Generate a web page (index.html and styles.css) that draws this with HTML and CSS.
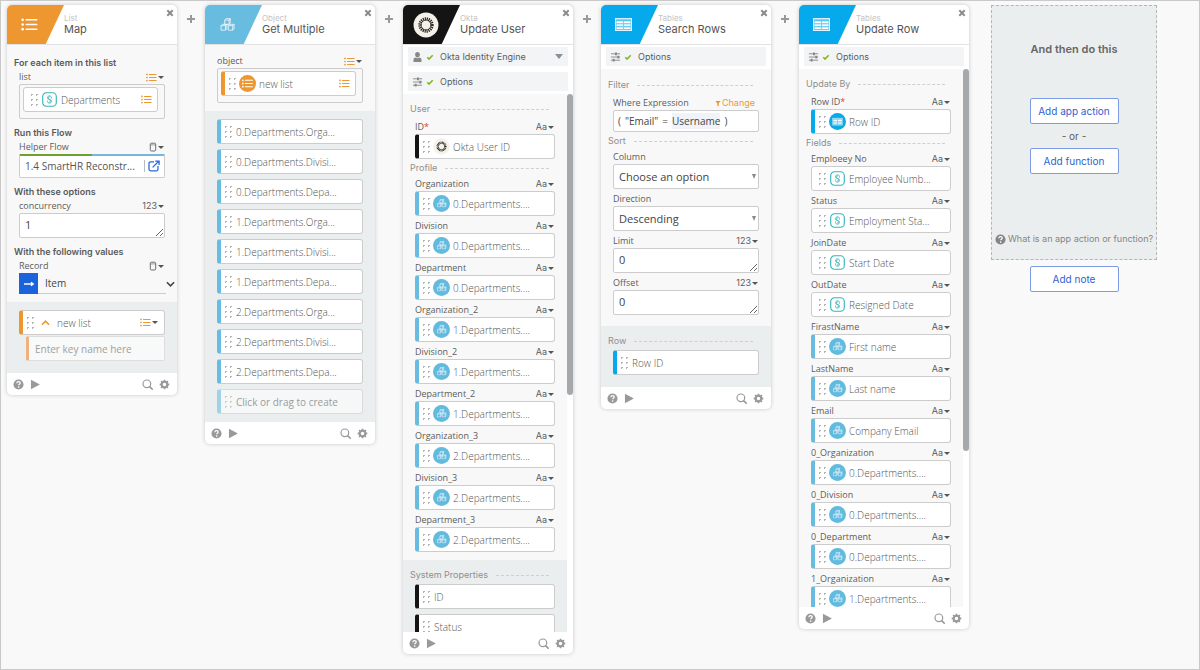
FILE: index.html
```html
<!DOCTYPE html>
<html lang="en">
<head>
<meta charset="utf-8">
<title>Flow editor</title>
<link rel="stylesheet" href="styles.css">
</head>
<body>
<svg class="sprite" aria-hidden="true">
  <symbol id="list" viewBox="0 0 18 14"><g fill="currentColor"><circle cx="1.6" cy="2" r="1.4"/><circle cx="1.6" cy="7" r="1.4"/><circle cx="1.6" cy="12" r="1.4"/><rect x="4.6" y="1.2" width="13" height="1.6" rx=".8"/><rect x="4.6" y="6.2" width="13" height="1.6" rx=".8"/><rect x="4.6" y="11.2" width="13" height="1.6" rx=".8"/></g></symbol>
  <symbol id="cubes" viewBox="0 0 16 14"><g fill="none" stroke="currentColor" stroke-width=".8" stroke-linejoin="round"><path d="M5 2.2h4.6v4.6H5zM5 2.2L6.6.7H11L9.600 2.2M11 .7v4.400L9.600 6.800M1 8.300h4.800v4.800H1zM1 8.300l1.500-1.500H7.300L5.800 8.300M7.300 6.800v4.800l-1.500 1.500M8.800 8.300h4.800v4.800H8.800zM8.800 8.300l1.500-1.500h4.800l-1.500 1.500M15.100 6.800v4.800l-1.500 1.500"/></g></symbol>
  <symbol id="table" viewBox="0 0 16 12"><path fill="currentColor" fill-rule="evenodd" d="M0 0h16v12H0zM1 .9v1h14v-1zM1.300 2.900v2h6.200v-2zM8.500 2.900v2h6.200v-2zM1.300 5.800v2h6.200v-2zM8.500 5.800v2h6.200v-2zM1.300 8.700v2h6.200v-2zM8.500 8.700v2h6.200v-2z" opacity=".45"/><path fill="currentColor" d="M1.300 2.900h6.200v2H1.300zM8.500 2.900h6.200v2H8.500zM1.300 5.700h6.200v2H1.300zM8.500 5.700h6.200v2H8.500zM1.300 8.500h6.200v2H1.300zM8.500 8.500h6.200v2H8.500zM0 0h16v1.200H0zM0 0h.7v12H0zM15.300 0h.7v12h-.7zM0 11.400h16v.6H0z"/></symbol>
  <symbol id="burst" viewBox="0 0 24 24"><circle cx="12" cy="12" r="11.500" fill="#f4f1e8"/><circle cx="12" cy="12" r="5.600" fill="none" stroke="#222" stroke-width="3" stroke-dasharray="1 .76"/><circle cx="12" cy="12" r="4.600" fill="none" stroke="#222" stroke-width=".6"/></symbol>
  <symbol id="hr" viewBox="0 0 18 18"><rect x="1.800" y="1.800" width="14.400" height="14.400" rx="4" fill="#fff" stroke="#35b5bb" stroke-width="1.200"/><g transform="translate(2.600 2.600) scale(.8)"><path fill="none" stroke="#35b5bb" stroke-width="1.150" stroke-linecap="round" stroke-linejoin="round" d="M10.600 6.200V5.600C10.600 4 9.500 3.200 8 3.200S5.400 4 5.400 5.500c0 1.200.6 1.800 1.700 2.300l1.800.8c.6.300.8.600.8 1.300 0 .9-.6 1.400-1.700 1.400M5.400 9.900v.5c0 1.600 1.100 2.400 2.600 2.400s2.600-.8 2.600-2.300c0-1.200-.6-1.800-1.700-2.300L7.100 7.400c-.6-.3-.8-.6-.8-1.300 0-.9.6-1.400 1.700-1.400"/></g></symbol>
  <symbol id="c-cubes" viewBox="0 0 18 18"><circle cx="9" cy="9" r="9" fill="#62bbdf"/><use href="#cubes" x="4" y="4" width="10.500" height="9.200" color="#fff"/></symbol>
  <symbol id="c-table" viewBox="0 0 18 18"><circle cx="9" cy="9" r="9" fill="#0aa9ea"/><use href="#table" x="3.500" y="5" width="11" height="8.200" color="#fff"/></symbol>
  <symbol id="c-list" viewBox="0 0 18 18"><circle cx="9" cy="9" r="9" fill="#ee9730"/><use href="#list" x="3" y="4.300" width="12" height="9.400" color="#fff"/></symbol>
  <symbol id="help" viewBox="0 0 12 12"><circle cx="6" cy="6" r="5.500" fill="currentColor"/><path d="M4.200 4.700C4.300 3.400 5 2.900 6.100 2.900s1.800.6 1.800 1.500c0 1.200-1.700 1.300-1.700 2.500" fill="none" stroke="#fff" stroke-width="1.400"/><circle cx="6.200" cy="8.800" r=".9" fill="#fff"/></symbol>
  <symbol id="play" viewBox="0 0 12 12"><path d="M1 .8v10.400l9.800-5.200z" fill="currentColor"/></symbol>
  <symbol id="search" viewBox="0 0 12 12"><path d="M8.500 8.500l2.700 2.700" stroke="currentColor" stroke-width="1.800" stroke-linecap="round"/><circle cx="5.300" cy="5.300" r="4.200" fill="none" stroke="currentColor" stroke-width="1.300"/></symbol>
  <symbol id="gear" viewBox="0 0 12 12"><circle cx="6" cy="6" r="3" fill="none" stroke="currentColor" stroke-width="2.200"/><path d="M6 .8v1.600M6 9.600v1.600M.8 6h1.600M9.600 6h1.600M2.300 2.300l1.200 1.200M8.500 8.500l1.200 1.200M9.700 2.300L8.500 3.500M3.500 8.500L2.300 9.700" stroke="currentColor" stroke-width="2"/></symbol>
  <symbol id="close" viewBox="0 0 8 8"><path d="M1.300 1.300l5.400 5.400M6.700 1.300L1.300 6.700" stroke="currentColor" stroke-width="2"/></symbol>
  <symbol id="plus" viewBox="0 0 8 8"><path d="M4 0v8M0 4h8" stroke="currentColor" stroke-width="2"/></symbol>
  <symbol id="sliders" viewBox="0 0 12 10"><path d="M1 1.500h10M1 5h10M1 8.500h10" stroke="currentColor" stroke-width="1"/><path d="M6.500 0v3M9 3.500v3M4 7v3" stroke="currentColor" stroke-width="2.200"/></symbol>
  <symbol id="user" viewBox="0 0 10 10"><path fill="currentColor" d="M5 0c1.500 0 2.400 1 2.400 2.500S6.500 5.600 5 5.600 2.600 4 2.600 2.500 3.500 0 5 0zM1 10V7.600C1 6.400 2 5.700 3 5.500c1 1 3 1 4 0 1 .2 2 .9 2 2.100V10z"/></symbol>
  <symbol id="check" viewBox="0 0 8 8"><path d="M1.300 4.300l1.700 1.700 3.700-3.800" fill="none" stroke="#83b81a" stroke-width="1.600"/></symbol>
  <symbol id="any" viewBox="0 0 8 10"><rect x="1.300" y="1.200" width="5.400" height="7.800" rx="1.200" fill="none" stroke="currentColor" stroke-width=".9"/><path d="M1.300 2.900h5.400" stroke="currentColor" stroke-width=".6"/></symbol>
  <symbol id="open" viewBox="0 0 12 12"><path d="M6 1.800H2.500c-.9 0-1.500.6-1.500 1.500v6c0 .9.600 1.500 1.500 1.500h6c.9 0 1.500-.6 1.500-1.500V6M4.600 7.400L10.300 1.700M7.200 1.100h3.900V5" fill="none" stroke="#2a6be0" stroke-width="1.300"/></symbol>
  <symbol id="arrow" viewBox="0 0 12 8"><path d="M1 4h9M8 2.200L10.300 4 8 5.800" fill="none" stroke="#fff" stroke-width="1.300"/></symbol>
  <symbol id="chev" viewBox="0 0 10 6"><path d="M1 1l4 4 4-4" fill="none" stroke="currentColor" stroke-width="1.700"/></symbol>
  <symbol id="funnel" viewBox="0 0 8 8"><path d="M.5.500h7L5 3.800V8L3 6.500V3.800z" fill="currentColor"/></symbol>
</svg>

<main class="board">
  <section class="card">
    <header class="head"><span class="logo orange"><svg class="logo-icon"><use href="#list"/></svg></span><div class="titles"><small>List</small><h2>Map</h2></div><button class="close" aria-label="Close"><svg><use href="#close"/></svg></button></header>
    <div class="body first">
      <h3>For each item in this list</h3>
      <div class="label"><span>list</span><button class="type list-type" aria-label="List type"><svg><use href="#list"/></svg></button></div>
      <div class="drop"><div class="pill plain"><i class="grip"></i><svg class="ic"><use href="#hr"/></svg><span>Departments</span><svg class="tail"><use href="#list"/></svg></div></div>
      <h3>Run this Flow</h3>
      <div class="label"><span>Helper Flow</span><button class="type" aria-label="Any type"><svg class="any"><use href="#any"/></svg></button></div>
      <div class="flow"><span>1.4 SmartHR Reconstr...</span><a href="#flow" aria-label="Open flow"><svg><use href="#open"/></svg></a></div>
      <h3>With these options</h3>
      <div class="label"><label for="conc">concurrency</label><button class="type">123</button></div>
      <textarea id="conc" rows="1">1</textarea>
      <h3>With the following values</h3>
      <div class="label"><span>Record</span><button class="type" aria-label="Any type"><svg class="any"><use href="#any"/></svg></button></div>
      <div class="record"><span class="go"><svg><use href="#arrow"/></svg></span><span class="item">Item</span><button aria-label="Expand"><svg><use href="#chev"/></svg></button></div>
    </div>
    <div class="out">
      <div class="pill s-orange key"><i class="grip"></i><svg class="up"><use href="#chev"/></svg><span>new list</span><button class="type list-type" aria-label="List type"><svg><use href="#list"/></svg></button></div>
      <input class="newkey" aria-label="Key name" placeholder="Enter key name here">
    </div>
    <footer class="foot"><button aria-label="Help"><svg><use href="#help"/></svg></button><button aria-label="Run"><svg><use href="#play"/></svg></button><button class="push" aria-label="Search"><svg><use href="#search"/></svg></button><button aria-label="Settings"><svg><use href="#gear"/></svg></button></footer>
  </section>
  <button class="add" aria-label="Insert step"><svg><use href="#plus"/></svg></button>

  <section class="card">
    <header class="head"><span class="logo sky"><svg class="logo-icon"><use href="#cubes"/></svg></span><div class="titles"><small>Object</small><h2>Get Multiple</h2></div><button class="close" aria-label="Close"><svg><use href="#close"/></svg></button></header>
    <div class="body object">
      <div class="label"><span>object</span><button class="type list-type" aria-label="List type"><svg><use href="#list"/></svg></button></div>
      <div class="drop"><div class="pill s-orange"><i class="grip"></i><svg class="ic"><use href="#c-list"/></svg><span>new list</span><svg class="tail"><use href="#list"/></svg></div></div>
    </div>
    <div class="out stack keys">
      <div class="pill s-sky"><i class="grip"></i><span>0.Departments.Orga...</span></div>
      <div class="pill s-sky"><i class="grip"></i><span>0.Departments.Divisi...</span></div>
      <div class="pill s-sky"><i class="grip"></i><span>0.Departments.Depa...</span></div>
      <div class="pill s-sky"><i class="grip"></i><span>1.Departments.Orga...</span></div>
      <div class="pill s-sky"><i class="grip"></i><span>1.Departments.Divisi...</span></div>
      <div class="pill s-sky"><i class="grip"></i><span>1.Departments.Depa...</span></div>
      <div class="pill s-sky"><i class="grip"></i><span>2.Departments.Orga...</span></div>
      <div class="pill s-sky"><i class="grip"></i><span>2.Departments.Divisi...</span></div>
      <div class="pill s-sky"><i class="grip"></i><span>2.Departments.Depa...</span></div>
      <div class="pill s-sky ghost"><i class="grip"></i><span>Click or drag to create</span></div>
    </div>
    <footer class="foot"><button aria-label="Help"><svg><use href="#help"/></svg></button><button aria-label="Run"><svg><use href="#play"/></svg></button><button class="push" aria-label="Search"><svg><use href="#search"/></svg></button><button aria-label="Settings"><svg><use href="#gear"/></svg></button></footer>
  </section>
  <button class="add" aria-label="Insert step"><svg><use href="#plus"/></svg></button>

  <section class="card">
    <header class="head"><span class="logo black"><svg class="logo-badge"><use href="#burst"/></svg></span><div class="titles"><small>Okta</small><h2>Update User</h2></div><button class="close" aria-label="Close"><svg><use href="#close"/></svg></button></header>
    <div class="bars">
      <button class="bar"><svg class="bar-icon"><use href="#user"/></svg><svg class="check"><use href="#check"/></svg><span>Okta Identity Engine</span><i class="caret"></i></button>
      <button class="bar"><svg class="bar-icon"><use href="#sliders"/></svg><svg class="check"><use href="#check"/></svg><span>Options</span></button>
    </div>
    <div class="scroller">
      <div class="content">
        <div class="body fields">
          <h4>User</h4>
          <div class="label"><span>ID<b>*</b></span><button class="type">Aa</button></div>
          <div class="pill s-black"><i class="grip"></i><svg class="ic"><use href="#burst"/></svg><span>Okta User ID</span></div>
          <h4>Profile</h4>
          <div class="label"><span>Organization</span><button class="type">Aa</button></div>
          <div class="pill s-sky"><i class="grip"></i><svg class="ic"><use href="#c-cubes"/></svg><span>0.Departments....</span></div>
          <div class="label"><span>Division</span><button class="type">Aa</button></div>
          <div class="pill s-sky"><i class="grip"></i><svg class="ic"><use href="#c-cubes"/></svg><span>0.Departments....</span></div>
          <div class="label"><span>Department</span><button class="type">Aa</button></div>
          <div class="pill s-sky"><i class="grip"></i><svg class="ic"><use href="#c-cubes"/></svg><span>0.Departments....</span></div>
          <div class="label"><span>Organization_2</span><button class="type">Aa</button></div>
          <div class="pill s-sky"><i class="grip"></i><svg class="ic"><use href="#c-cubes"/></svg><span>1.Departments....</span></div>
          <div class="label"><span>Division_2</span><button class="type">Aa</button></div>
          <div class="pill s-sky"><i class="grip"></i><svg class="ic"><use href="#c-cubes"/></svg><span>1.Departments....</span></div>
          <div class="label"><span>Department_2</span><button class="type">Aa</button></div>
          <div class="pill s-sky"><i class="grip"></i><svg class="ic"><use href="#c-cubes"/></svg><span>1.Departments....</span></div>
          <div class="label"><span>Organization_3</span><button class="type">Aa</button></div>
          <div class="pill s-sky"><i class="grip"></i><svg class="ic"><use href="#c-cubes"/></svg><span>2.Departments....</span></div>
          <div class="label"><span>Division_3</span><button class="type">Aa</button></div>
          <div class="pill s-sky"><i class="grip"></i><svg class="ic"><use href="#c-cubes"/></svg><span>2.Departments....</span></div>
          <div class="label"><span>Department_3</span><button class="type">Aa</button></div>
          <div class="pill s-sky"><i class="grip"></i><svg class="ic"><use href="#c-cubes"/></svg><span>2.Departments....</span></div>
        </div>
        <div class="out stack">
          <h4>System Properties</h4>
          <div class="pill s-black"><i class="grip"></i><span>ID</span></div>
          <div class="pill s-black"><i class="grip"></i><span>Status</span></div>
        </div>
      </div>
      <div class="track"><div class="thumb short"></div></div>
    </div>
    <footer class="foot"><button aria-label="Help"><svg><use href="#help"/></svg></button><button aria-label="Run"><svg><use href="#play"/></svg></button><button class="push" aria-label="Search"><svg><use href="#search"/></svg></button><button aria-label="Settings"><svg><use href="#gear"/></svg></button></footer>
  </section>
  <button class="add" aria-label="Insert step"><svg><use href="#plus"/></svg></button>

  <section class="card">
    <header class="head"><span class="logo azure"><svg class="logo-icon"><use href="#table"/></svg></span><div class="titles"><small>Tables</small><h2>Search Rows</h2></div><button class="close" aria-label="Close"><svg><use href="#close"/></svg></button></header>
    <div class="bars"><button class="bar"><svg class="bar-icon"><use href="#sliders"/></svg><svg class="check"><use href="#check"/></svg><span>Options</span></button></div>
    <div class="body search">
      <h4>Filter</h4>
      <div class="label"><span>Where Expression</span><button class="change"><svg><use href="#funnel"/></svg>Change</button></div>
      <div class="expr"><span>(</span><span>"Email"</span><span>=</span><mark>Username</mark><span>)</span></div>
      <h4>Sort</h4>
      <div class="label"><label for="col">Column</label></div>
      <div class="pick"><select id="col"><option>Choose an option</option></select></div>
      <div class="label"><label for="dir">Direction</label></div>
      <div class="pick"><select id="dir"><option>Descending</option></select></div>
      <div class="label"><label for="limit">Limit</label><button class="type">123</button></div>
      <textarea id="limit" rows="1">0</textarea>
      <div class="label"><label for="offset">Offset</label><button class="type">123</button></div>
      <textarea id="offset" rows="1">0</textarea>
    </div>
    <div class="out row-out">
      <h4>Row</h4>
      <div class="pill s-azure"><i class="grip"></i><span>Row ID</span></div>
    </div>
    <footer class="foot"><button aria-label="Help"><svg><use href="#help"/></svg></button><button aria-label="Run"><svg><use href="#play"/></svg></button><button class="push" aria-label="Search"><svg><use href="#search"/></svg></button><button aria-label="Settings"><svg><use href="#gear"/></svg></button></footer>
  </section>
  <button class="add" aria-label="Insert step"><svg><use href="#plus"/></svg></button>

  <section class="card">
    <header class="head"><span class="logo azure"><svg class="logo-icon"><use href="#table"/></svg></span><div class="titles"><small>Tables</small><h2>Update Row</h2></div><button class="close" aria-label="Close"><svg><use href="#close"/></svg></button></header>
    <div class="bars"><button class="bar"><svg class="bar-icon"><use href="#sliders"/></svg><svg class="check"><use href="#check"/></svg><span>Options</span></button></div>
    <div class="scroller">
      <div class="content">
        <div class="body fields">
          <h4>Update By</h4>
          <div class="label"><span>Row ID<b>*</b></span><button class="type">Aa</button></div>
          <div class="pill s-azure"><i class="grip"></i><svg class="ic"><use href="#c-table"/></svg><span>Row ID</span></div>
          <h4>Fields</h4>
          <div class="label"><span>Emploeey No</span><button class="type">Aa</button></div>
          <div class="pill plain"><i class="grip"></i><svg class="ic"><use href="#hr"/></svg><span>Employee Numb...</span></div>
          <div class="label"><span>Status</span><button class="type">Aa</button></div>
          <div class="pill plain"><i class="grip"></i><svg class="ic"><use href="#hr"/></svg><span>Employment Sta...</span></div>
          <div class="label"><span>JoinDate</span><button class="type">Aa</button></div>
          <div class="pill plain"><i class="grip"></i><svg class="ic"><use href="#hr"/></svg><span>Start Date</span></div>
          <div class="label"><span>OutDate</span><button class="type">Aa</button></div>
          <div class="pill plain"><i class="grip"></i><svg class="ic"><use href="#hr"/></svg><span>Resigned Date</span></div>
          <div class="label"><span>FirastName</span><button class="type">Aa</button></div>
          <div class="pill s-sky"><i class="grip"></i><svg class="ic"><use href="#c-cubes"/></svg><span>First name</span></div>
          <div class="label"><span>LastName</span><button class="type">Aa</button></div>
          <div class="pill s-sky"><i class="grip"></i><svg class="ic"><use href="#c-cubes"/></svg><span>Last name</span></div>
          <div class="label"><span>Email</span><button class="type">Aa</button></div>
          <div class="pill s-sky"><i class="grip"></i><svg class="ic"><use href="#c-cubes"/></svg><span>Company Email</span></div>
          <div class="label"><span>0_Organization</span><button class="type">Aa</button></div>
          <div class="pill s-sky"><i class="grip"></i><svg class="ic"><use href="#c-cubes"/></svg><span>0.Departments....</span></div>
          <div class="label"><span>0_Division</span><button class="type">Aa</button></div>
          <div class="pill s-sky"><i class="grip"></i><svg class="ic"><use href="#c-cubes"/></svg><span>0.Departments....</span></div>
          <div class="label"><span>0_Department</span><button class="type">Aa</button></div>
          <div class="pill s-sky"><i class="grip"></i><svg class="ic"><use href="#c-cubes"/></svg><span>0.Departments....</span></div>
          <div class="label"><span>1_Organization</span><button class="type">Aa</button></div>
          <div class="pill s-sky"><i class="grip"></i><svg class="ic"><use href="#c-cubes"/></svg><span>1.Departments....</span></div>
        </div>
      </div>
      <div class="track"><div class="thumb long"></div></div>
    </div>
    <footer class="foot"><button aria-label="Help"><svg><use href="#help"/></svg></button><button aria-label="Run"><svg><use href="#play"/></svg></button><button class="push" aria-label="Search"><svg><use href="#search"/></svg></button><button aria-label="Settings"><svg><use href="#gear"/></svg></button></footer>
  </section>

  <aside class="next">
    <div class="panel">
      <h2>And then do this</h2>
      <div class="choices">
        <button class="cta">Add app action</button>
        <span>- or -</span>
        <button class="cta">Add function</button>
      </div>
      <a class="what" href="#help-topic"><svg><use href="#help"/></svg>What is an app action or function?</a>
    </div>
    <button class="cta">Add note</button>
  </aside>
</main>
</body>
</html>
```

FILE: styles.css
```css
* { box-sizing: border-box; }
body {
  margin: 0;
  min-height: 100vh;
  background: #f9f9f9;
  border: 1px solid #c9c9c9;
  color: #5c5c5c;
  font: 9px/14px "Open Sans", "Noto Sans", sans-serif;
}
button {
  margin: 0;
  padding: 0;
  border: 0;
  background: none;
  color: inherit;
  font: inherit;
  cursor: pointer;
}
svg { display: block; flex: none; }
.sprite { position: absolute; width: 0; height: 0; }
h2, h3, h4 { margin: 0; }

.board {
  display: flex;
  align-items: flex-start;
  padding: 4px 42px 0 6px;
}
.card {
  flex: 1 1 0;
  min-width: 0;
  background: #fff;
  border-radius: 5px;
  box-shadow: 0 0 4px rgba(0, 0, 0, .2);
  overflow: hidden;
}
.add { flex: none; width: 28px; padding: 10px 10px 0; color: #999; }
.add svg { width: 8px; height: 8px; }

/* card header */
.head {
  display: flex;
  height: 40px;
  border-bottom: 1px solid #e2e2e2;
}
.logo {
  display: flex;
  align-items: center;
  flex: none;
  width: 57px;
  padding-left: 14px;
  color: #fff;
  clip-path: polygon(0 0, 100% 0, 68% 100%, 0 100%);
}
.orange { background: #ee9730; }
.sky { background: #68bcdf; }
.black { background: #141414; }
.azure { background: #06a9ec; }
.logo-icon { width: 17px; height: 13px; }
.black { padding-left: 10px; }
.logo-badge { width: 26px; height: 26px; }
.titles {
  flex: 1;
  min-width: 0;
  padding-top: 7px;
  font-family: Inter, sans-serif;
}
.titles small {
  display: block;
  color: #c4c4c4;
  font-size: 8px;
  line-height: 12px;
}
.titles h2 {
  color: #555;
  font-size: 11px;
  font-weight: 400;
  line-height: 10px;
}
.close { align-self: flex-start; padding: 4px 3px; color: #8b8b8b; }
.close svg { width: 8px; height: 8px; }

/* account and option bars */
.bars {
  display: grid;
  gap: 6px;
  padding: 2px 5px 3px;
}
.bar {
  display: flex;
  align-items: center;
  height: 19px;
  padding: 0 5px 0 4px;
  background: #f2f4f6;
  color: #5c5c5c;
  font-family: Inter, sans-serif;
  text-align: left;
}
.bar-icon { width: 11px; height: 10px; color: #888; }
.check { width: 8px; height: 8px; margin: 0 6px 0 3px; }
.bar span { flex: 1; }
.caret {
  border: 4px solid transparent;
  border-top: 5px solid #8a9096;
  border-bottom: 0;
}

/* bodies */
.body { padding: 0 12px 8px; background: #f8f8f8; }
.first { padding-top: 11px; }
.object { padding-top: 9px; }
.search { padding: 9px 12px 11px; }
.fields { padding-top: 8px; }
.out {
  padding: 8px 12px 12px;
  background: #ebeeef;
}
.keys { padding-bottom: 8px; }
h3 {
  margin: 7px -5px 0;
  color: #5a5a5a;
  font: 600 9px/14px Inter, sans-serif;
}
h3:first-child { margin-top: 0; }
h4 {
  display: flex;
  align-items: center;
  gap: 8px;
  margin: 2px 6px 2px -5px;
  color: #8e8e8e;
  font: 400 9px/14px Inter, sans-serif;
}
h4:first-child { margin: 0 6px 4px -5px; }
.out h4:first-child { margin-bottom: 2px; }
h4::after { content: ""; flex: 1; border-top: 1px dashed #cfcfcf; }
.label {
  display: flex;
  justify-content: space-between;
  height: 14px;
  line-height: 14px;
}
.label b { color: #e33; font-weight: 400; }
.pill + .label, .pick + .label, textarea + .label { margin-top: 3px; }
.type { display: flex; align-items: center; gap: 1px; margin-right: 1px; font-family: Inter, sans-serif; }
.type::after {
  content: "";
  border: 3px solid transparent;
  border-top-color: #555;
  border-bottom: 0;
}
.type svg { width: 11px; height: 9px; }
.type .any { width: 8px; height: 10px; }
.list-type svg { color: #ee9730; }

/* draggable pills */
.pill {
  display: flex;
  align-items: center;
  gap: 3px;
  height: 25px;
  padding: 0 5px 0 2px;
  background: #fff;
  border: 1px solid #ccc;
  border-left-width: 4px;
  border-radius: 3px;
  color: #555;
  font: 300 10px/16px "Open Sans", "Noto Sans", sans-serif;
  white-space: nowrap;
}
.plain { border-left-width: 1px; padding-left: 5px; }
.s-orange { border-left-color: #ee9730; }
.s-sky { border-left-color: #68bcdf; }
.s-black { border-left-color: #141414; }
.s-azure { border-left-color: #06a9ec; }
.pill > span { flex: 1; min-width: 0; overflow: hidden; }
.grip {
  flex: none;
  width: 9px;
  height: 15px;
  background: radial-gradient(circle, #b4b4b4 1px, transparent 1px) 0 0 / 5px 5px;
}
.grip + span { padding-left: 1px; }
.ic { width: 17px; height: 17px; }
.tail { width: 11px; height: 9px; color: #ee9730; }
.drop {
  height: 35px;
  padding: 2px 6px 6px 3px;
  background: #f8f8f8;
  border: 1px solid #ccc;
  border-radius: 2px;
}
.stack .pill + .pill { margin-top: 5px; }
.stack .ghost { opacity: .55; font-weight: 400; }
.up { width: 9px; height: 6px; margin: 0 4px; color: #ee9730; transform: rotate(180deg); }
.newkey {
  display: block;
  width: calc(100% - 7px);
  height: 25px;
  margin: 1px 0 0 7px;
  padding: 0 6px;
  background: #f8f9f9;
  border: 1px solid #ddd;
  border-left: 3px solid #f0b27c;
  border-radius: 2px;
  font: 400 10px/16px "Open Sans", sans-serif;
}
.newkey::placeholder { color: #a0a0a0; }

/* inputs */
.flow {
  display: flex;
  align-items: center;
  height: 24px;
  padding-left: 5px;
  border: 1px solid #ccc;
  border-top: 0;
  border-radius: 0 0 2px 2px;
  background: linear-gradient(90deg, #6f9f2c 50%, #74b9dd 50%) 0 0 / 100% 2px no-repeat #fff;
  color: #555;
  font: 400 10px/16px "Open Sans", sans-serif;
  white-space: nowrap;
}
.flow span { flex: 1; min-width: 0; overflow: hidden; }
.flow a { padding: 0 4px 0 3px; border-left: 1px solid #bbb; }
.flow svg { width: 12px; height: 12px; }
textarea, select, .expr {
  display: block;
  width: 100%;
  height: 25px;
  margin: 0;
  padding: 4px 5px;
  background: #fff;
  border: 1px solid #ccc;
  border-radius: 2px;
  color: #444;
  font: 400 11px/16px "Open Sans", sans-serif;
  overflow: hidden;
}
textarea { padding-top: 3px; resize: vertical; }
select { appearance: none; padding: 0 5px; }
.pick { display: grid; align-items: center; }
.pick > select, .pick::after { grid-area: 1 / 1; }
.pick::after {
  content: "";
  justify-self: end;
  margin-right: 3px;
  border: 2px solid transparent;
  border-top: 5px solid #888;
  border-bottom: 0;
  pointer-events: none;
}
.expr {
  display: flex;
  align-items: center;
  gap: 4px;
  height: 22px;
  padding: 0 4px;
  font-size: 10px;
}
.expr mark { background: #f0f3f7; color: inherit; }
.change { display: flex; align-items: center; gap: 1px; margin-right: 4px; color: #ee9730; font-family: Inter, sans-serif; }
.change svg { width: 6px; height: 7px; }
.record {
  display: flex;
  align-items: center;
  height: 21px;
  margin-right: -10px;
  color: #444;
  font: 400 10px/16px "Open Sans", sans-serif;
}
.go { display: grid; place-items: center; width: 19px; height: 21px; background: #1b62dd; }
.go svg { width: 12px; height: 8px; }
.item { flex: 1; height: 21px; padding: 2px 7px; border-bottom: 1px solid #ccc; }
.record button svg { width: 9px; height: 6px; }

/* scrolling cards */
.scroller { display: flex; height: calc(100vh - 132px); min-height: 200px; }
.content { flex: 1; min-width: 0; overflow: hidden; }
.track { flex: none; width: 6px; }
.thumb { background: #a6a9ac; border-radius: 3px; }
.short { height: 56%; }
.long { height: 71%; }

.foot {
  display: flex;
  align-items: center;
  gap: 6px;
  height: 22px;
  padding: 0 7px 0 6px;
  color: #999;
}
.foot svg { width: 11px; height: 11px; }
.push { margin-left: auto; }

/* next step */
.next {
  flex: none;
  display: flex;
  flex-direction: column;
  align-items: center;
  gap: 6px;
  width: 166px;
  margin-left: 22px;
  font: 10px/14px Inter, sans-serif;
}
.panel {
  display: flex;
  flex-direction: column;
  align-items: center;
  justify-content: space-between;
  width: 100%;
  height: 255px;
  padding: 36px 0 13px;
  background: #ebeeef;
  border: 1px dashed #b5b5b5;
}
.panel h2 { font-size: 11px; font-weight: 600; line-height: 14px; color: #666; }
.choices { display: grid; justify-items: center; gap: 5px; margin-bottom: 16px; }
.cta {
  width: 89px;
  height: 26px;
  background: #fff;
  border: 1px solid #7d9ae6;
  border-radius: 2px;
  color: #2f5fd0;
}
.what {
  display: flex;
  align-items: center;
  gap: 2px;
  color: #858585;
  font-size: 9px;
  text-decoration: none;
  white-space: nowrap;
}
.what svg { width: 11px; height: 11px; }
```
